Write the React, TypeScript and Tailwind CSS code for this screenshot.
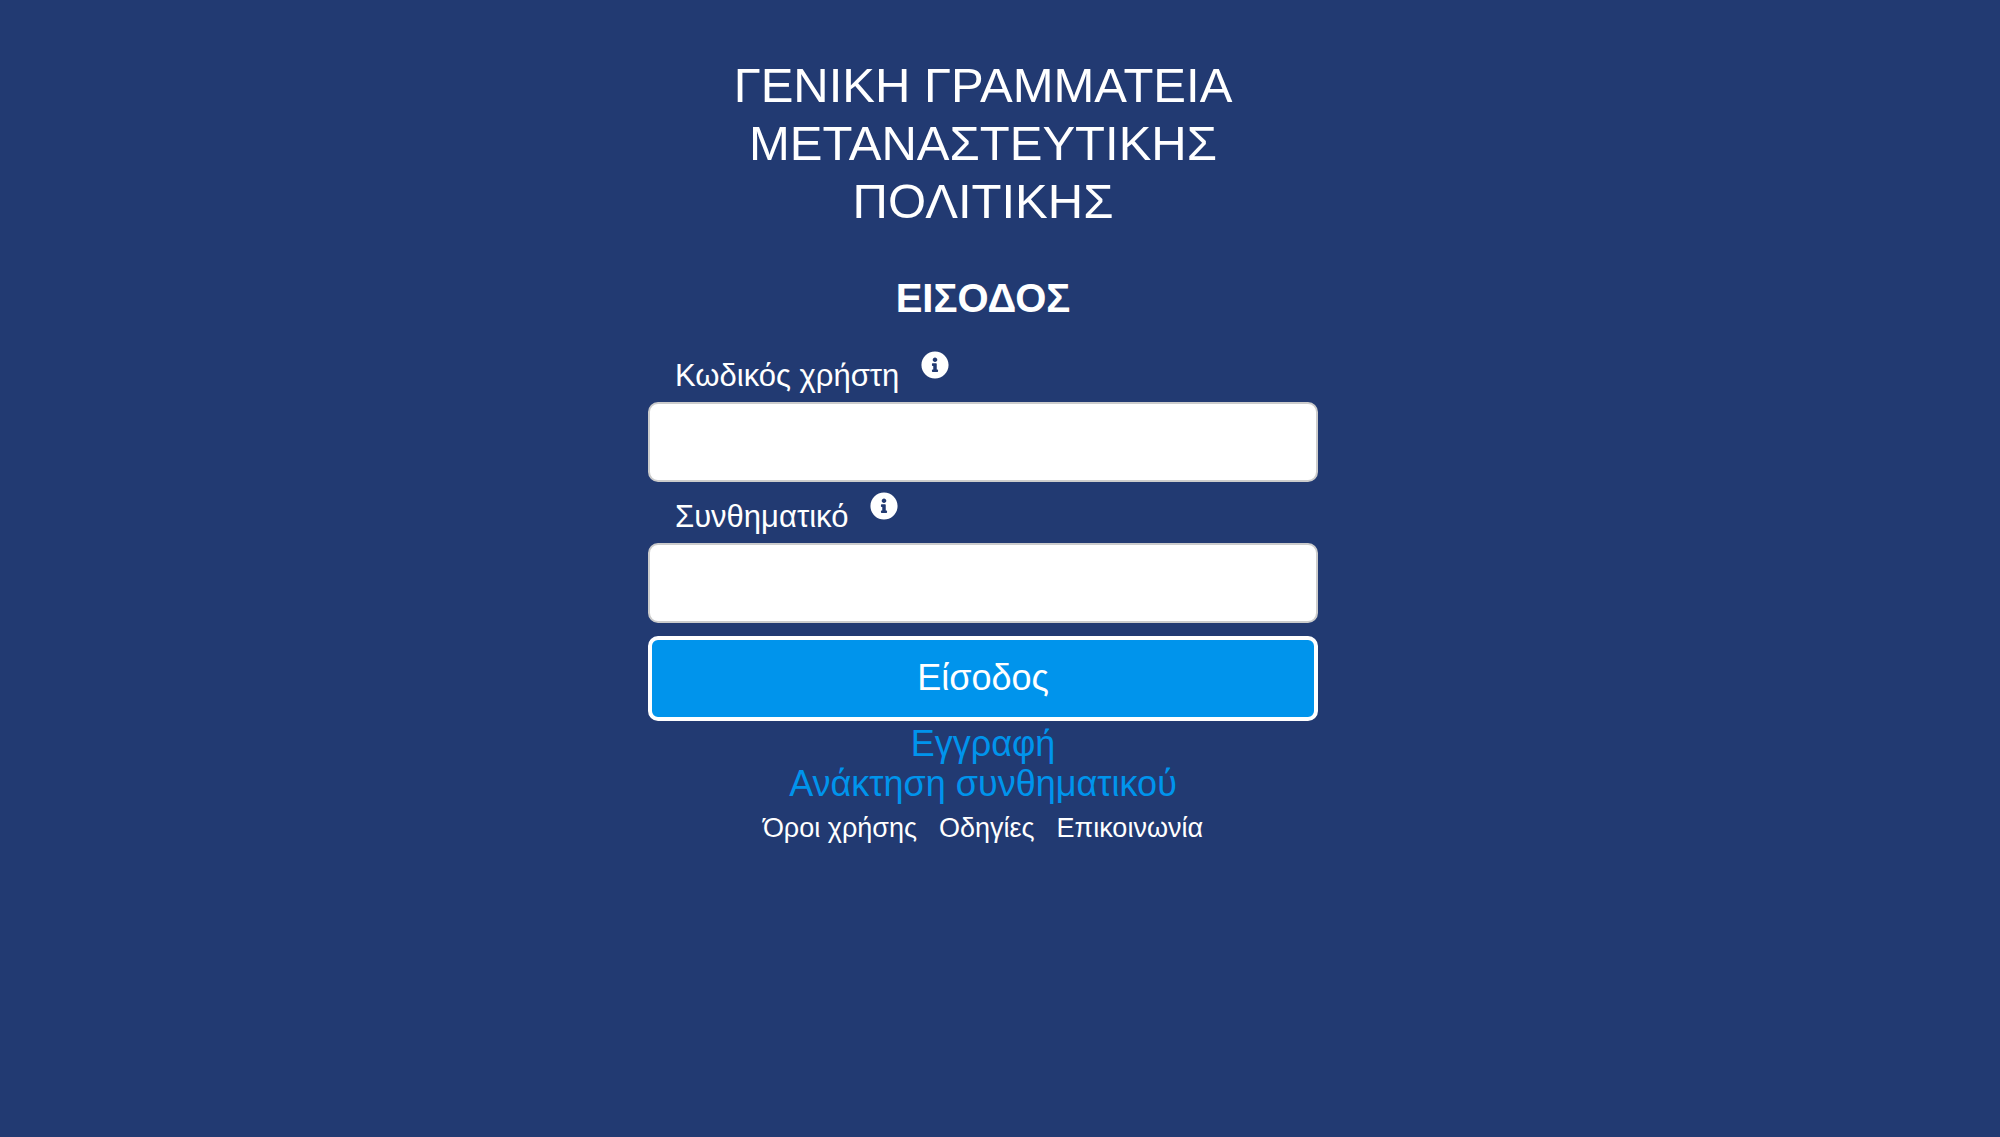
import React, { useState } from 'react';
import { FaInfoCircle } from 'react-icons/fa';

interface FieldProps {
  label: string;
  name: string;
  type: string;
  value: string;
  onChange: (e: React.ChangeEvent<HTMLInputElement>) => void;
}

const Field = ({ label, name, type, value, onChange }: FieldProps) => (
  <div className="flex flex-col gap-1">
    <div className="flex items-start gap-[22px] px-[27px]">
      <label className="text-[31px] leading-11" htmlFor={name}>
        {label}
      </label>
      <FaInfoCircle className="size-7 mt-[-3px]" />
    </div>
    <input
      className="w-full h-20 px-6 rounded-[10px] border-2 border-[#cccccc] bg-white text-[31px] text-[#333333]"
      id={name}
      name={name}
      type={type}
      value={value}
      onChange={onChange}
    />
  </div>
);

const App = () => {
  const [formData, setFormData] = useState({ username: '', password: '' });

  const handleChange = (e: React.ChangeEvent<HTMLInputElement>) => {
    setFormData({ ...formData, [e.target.name]: e.target.value });
  };

  const handleSubmit = (e: React.FormEvent<HTMLFormElement>) => {
    e.preventDefault();
  };

  return (
    <div className="min-h-screen bg-[#223a72] pt-14 pr-[34px] text-white font-['Liberation_Sans',Arial,sans-serif]">
      <main className="mx-auto w-full max-w-[670px] text-center">
        <h1 className="text-[49px] leading-[58px]">
          ΓΕΝΙΚΗ ΓΡΑΜΜΑΤΕΙΑ ΜΕΤΑΝΑΣΤΕΥΤΙΚΗΣ ΠΟΛΙΤΙΚΗΣ
        </h1>
        <h2 className="mt-11 text-[40px] leading-12 font-bold">ΕΙΣΟΔΟΣ</h2>

        <form onSubmit={handleSubmit} className="mt-8 flex flex-col gap-[13px]">
          <Field
            label="Κωδικός χρήστη"
            name="username"
            type="text"
            value={formData.username}
            onChange={handleChange}
          />
          <Field
            label="Συνθηματικό"
            name="password"
            type="password"
            value={formData.password}
            onChange={handleChange}
          />
          <button
            className="w-full h-[85px] pb-[2px] rounded-[10px] border-4 border-white bg-[#0094ec] text-[36px] leading-10 cursor-pointer"
            type="submit"
          >
            Είσοδος
          </button>
        </form>

        <div className="mt-[3px] flex flex-col items-center text-[36px] leading-10 text-[#0094ec]">
          <a href="#register">Εγγραφή</a>
          <a href="#recover">Ανάκτηση συνθηματικού</a>
        </div>

        <footer className="mt-2 flex justify-center gap-[22px] text-[27px] leading-8">
          <a href="#terms">Όροι χρήσης</a>
          <a href="#help">Οδηγίες</a>
          <a href="#contact">Επικοινωνία</a>
        </footer>
      </main>
    </div>
  );
};

export default App;
